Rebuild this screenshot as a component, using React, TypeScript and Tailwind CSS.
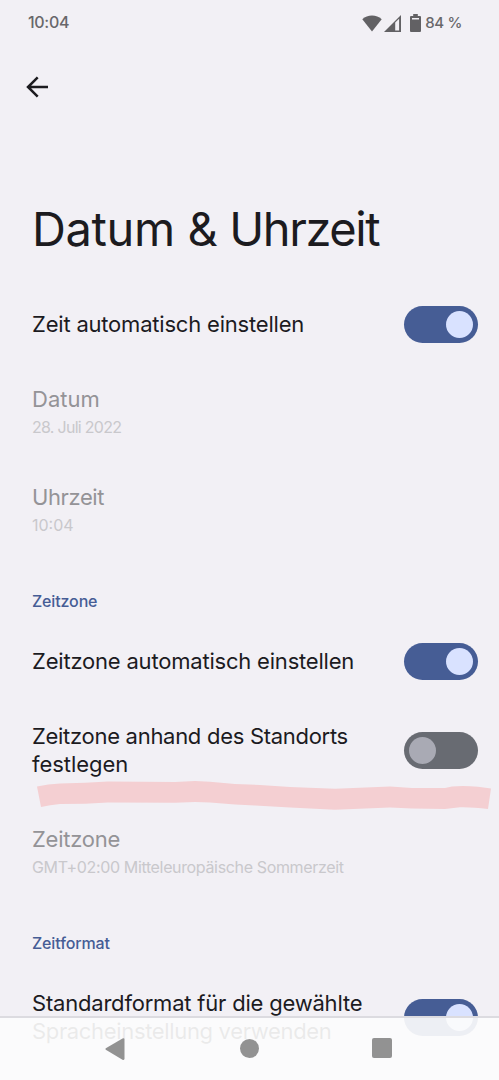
import type { ReactNode } from "react";

function Toggle({ on }: { on: boolean }) {
  return (
    <button
      role="switch"
      aria-checked={on}
      className={`flex h-[37px] w-[74px] shrink-0 items-center rounded-full px-[5px] ${
        on ? "justify-end bg-[#465d95]" : "mt-[2px] justify-start bg-[#686b72]"
      }`}
    >
      <span className={`size-[27px] rounded-full ${on ? "bg-[#d9e2ff]" : "bg-[#a9aab4]"}`} />
    </button>
  );
}

function SwitchRow({ on, tall, children }: { on: boolean; tall?: boolean; children: ReactNode }) {
  return (
    <div className={`flex shrink-0 items-center justify-between pr-[21px] pl-8 ${tall ? "h-[103px]" : "h-[73px]"}`}>
      <div
        className={`text-[22px] leading-[28px] tracking-[-0.2px] whitespace-nowrap text-[#1c1b1f] ${
          tall ? "" : "mb-[2px]"
        }`}
      >
        {children}
      </div>
      <Toggle on={on} />
    </div>
  );
}

function DisabledRow({ title, value }: { title: ReactNode; value: ReactNode }) {
  return (
    <div className="flex h-[98px] shrink-0 flex-col pt-6 pl-8 whitespace-nowrap">
      <div className="text-[22px] leading-[28px] text-[#949397]">{title}</div>
      <div className="text-[16px] leading-[28px] text-[#c9c8cc]">{value}</div>
    </div>
  );
}

function SectionHeader({ children }: { children: ReactNode }) {
  return (
    <h2 className="flex h-[67px] shrink-0 items-center pt-[21px] pl-8 text-[16px] font-medium tracking-[-0.14px] text-[#465d95]">
      {children}
    </h2>
  );
}

export default function App() {
  return (
    <div className="relative flex h-[1080px] w-[499px] flex-col overflow-hidden bg-[#f2f0f5] font-['Inter','Liberation_Sans',sans-serif]">
      <header className="flex h-[46px] shrink-0 items-center justify-between pr-[37px] pl-[28px] text-[16px] font-medium text-[#68676a]">
        <span className="mb-[2px] tracking-[-0.3px]">10:04</span>
        <div className="flex items-center">
          <svg width="20" height="17" viewBox="0 0 20 17" fill="#626164">
            <path d="M10 16.5 0.3 4.2C3 1.8 6.3.5 10 .5s7 1.3 9.7 3.7Z" />
          </svg>
          <svg className="ml-[2px]" width="17" height="17" viewBox="0 0 17 17" fill="#626164">
            <path fillRule="evenodd" d="M0 17 17 0v17ZM11.2 7.4v8h3.9V3.800Z" />
          </svg>
          <svg className="ml-[9px]" width="11" height="18" viewBox="0 0 11 18" fill="#626164">
            <path fillRule="evenodd" d="M3.2 0h4.6v2H10q1 0 1 1v14q0 1-1 1H1q-1 0-1-1V3q0-1 1-1h2.200ZM2 4v1.600h7V4Z" />
          </svg>
          <span className="ml-[4px] text-[15px] tracking-[-0.35px]">84 %</span>
        </div>
      </header>

      <div className="flex h-[83px] shrink-0 items-center pb-[2px] pl-[26px]">
        <svg width="23" height="22" viewBox="0 0 23 22" fill="none" stroke="#1c1b1f" strokeWidth="2.500">
          <path d="M22 11H3M11.700 1.300 2 11l9.700 9.700" />
        </svg>
      </div>

      <h1 className="h-[159px] shrink-0 pt-[70px] pl-8 text-[47px] leading-[60px] tracking-[-1.4px] whitespace-nowrap text-[#1c1b1f]">
        <span className="tracking-[-0.4px]">Datum &amp;</span> Uhrzeit
      </h1>

      <SwitchRow on>Zeit automatisch einstellen</SwitchRow>
      <DisabledRow title="Datum" value={<span className="tracking-[-0.72px]">28. Juli 2022</span>} />
      <DisabledRow title={<span className="tracking-[-0.4px]">Uhrzeit</span>} value="10:04" />

      <SectionHeader>Zeitzone</SectionHeader>
      <div className="shrink-0 pt-px">
        <SwitchRow on>Zeitzone automatisch einstellen</SwitchRow>
      </div>
      <div className="relative shrink-0">
        <SwitchRow on={false} tall>
          <span className="tracking-[-0.29px]">Zeitzone anhand des Standorts</span>
          <br />
          <span className="tracking-[-0.05px]">festlegen</span>
        </SwitchRow>
        <svg className="absolute top-[82px] left-[36px]" width="456" height="30" viewBox="36 780 456 30" fill="#f4cfd2">
          <path d="M37 786.500Q48 784 60 783.500L85 782.700 108 781.500 175 782 195 781 210 781.700 235 784 260 785 290 787 335 788.700 390 786.500 412 788 445 788 452 786.500Q463 785.500 478 786.700L491 788.500 488 809Q472 807 460 807.300L445 809 412 808.500 390 807.500 335 809.700 290 807.500 255 805.500 235 804.500 210 802.500 195 802 175 802.700 108 802.500 85 803.700 60 804Q50 805 41 807Z" />
        </svg>
      </div>
      <DisabledRow
        title={<span className="tracking-[-0.25px]">Zeitzone</span>}
        value={<span className="tracking-[-0.35px]">GMT+02:00 Mitteleuropäische Sommerzeit</span>}
      />

      <SectionHeader>Zeitformat</SectionHeader>
      <SwitchRow on tall>
        <div className="mb-[2px]">
          Standardformat für die gewählte
          <br />
          <span className="tracking-[-0.34px]">Spracheinstellung verwenden</span>
        </div>
      </SwitchRow>

      <nav className="absolute inset-x-0 bottom-0 flex h-[64px] items-start border-t-2 border-[#dcdbe0] bg-[#fcfcfc]/92 bg-clip-padding pt-[20px] pl-[105px]">
        <svg width="20" height="22" viewBox="0 0 20 22" fill="#929292">
          <path d="M.8 10.200Q0 11 .8 11.700L17.500 21.700Q19.500 22.500 19.500 20.500V1.500Q19.500-.5 17.500.5Z" />
        </svg>
        <span className="mt-px ml-[115px] size-[19px] rounded-full bg-[#929292]" />
        <span className="ml-[113px] size-[20px] rounded-[2px] bg-[#929292]" />
      </nav>
    </div>
  );
}
